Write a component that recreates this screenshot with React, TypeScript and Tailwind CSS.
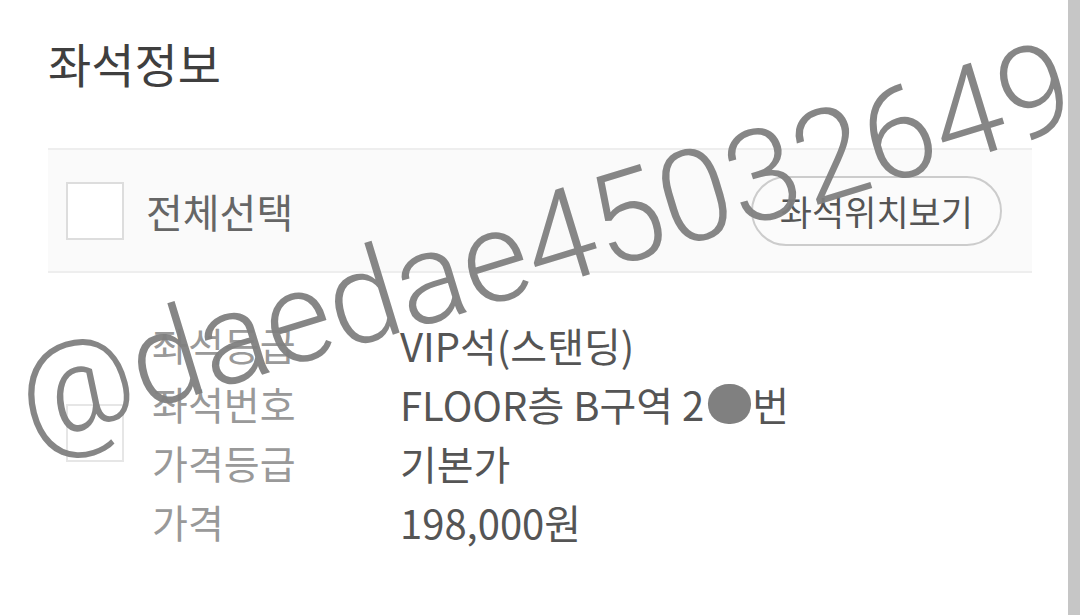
import React from "react";

const rows = [
  { label: "좌석등급", value: "VIP석(스탠딩)" },
  { label: "좌석번호", value: "seat" },
  { label: "가격등급", value: "기본가" },
  { label: "가격", value: "198,000원" },
];

export default function App() {
  return (
    <div className="relative flex h-[615px] w-[1080px] overflow-hidden bg-white font-['Noto_Sans_CJK_KR','Noto_Sans',sans-serif]">
      <main className="flex-1 pl-[48px] pr-[36px]">
        {/* Title */}
        <h2 className="pt-[28px] text-[47px] font-normal leading-[70px] text-[#3f3f3f]">좌석정보</h2>

        {/* Select all band */}
        <div className="mt-[50px] flex h-[125px] items-center justify-between border-t-2 border-b-2 border-[#eeeeee] bg-[#fafafa] pl-[18px] pr-[30px]">
          <div className="flex items-center gap-[22px]">
            <div className="h-[58px] w-[58px] border-2 border-[#dddddd] bg-white" />
            <span className="text-[40px] leading-none text-[#666]">전체선택</span>
          </div>
          <button className="flex h-[70px] items-center rounded-full border-2 border-[#cccccc] bg-[#fbfbfb] px-[27px] text-[35px] leading-none text-[#555]">
            좌석위치보기
          </button>
        </div>

        {/* Seat rows */}
        <div className="mt-[42px] flex items-center pl-[18px]">
          <div className="h-[58px] w-[58px] border-2 border-[#e6e6e6] bg-white" />
          <div className="ml-[28px] flex flex-col">
            {rows.map((r) => (
              <div key={r.label} className="flex h-[59px] items-center text-[39px] leading-none">
                <span className="w-[248px] text-[#999]">{r.label}</span>
                {r.value === "seat" ? (
                  <span className="flex items-center text-[40px] text-[#555]">
                    FLOOR층 B구역 2
                    <span className="relative inline-block w-[48px]">
                      <span className="invisible">00</span>
                      <span className="absolute left-[4px] top-1/2 h-[40px] w-[43px] -translate-y-1/2 rounded-[48%] bg-[#808080]" />
                    </span>
                    번
                  </span>
                ) : (
                  <span className="text-[40px] text-[#555]">{r.value}</span>
                )}
              </div>
            ))}
          </div>
        </div>
      </main>

      {/* Scrollbar strip */}
      <div className="h-full w-[12px] bg-[#c6c6c6]" />

      {/* Watermark */}
      <div className="pointer-events-none absolute left-[38px] top-[336px] origin-bottom-left -rotate-[17deg] whitespace-nowrap font-['Roboto','Liberation_Sans',sans-serif] text-[128px] font-light leading-none text-[#7f7f7f]/95">
        @daedae45032649
      </div>
    </div>
  );
}
